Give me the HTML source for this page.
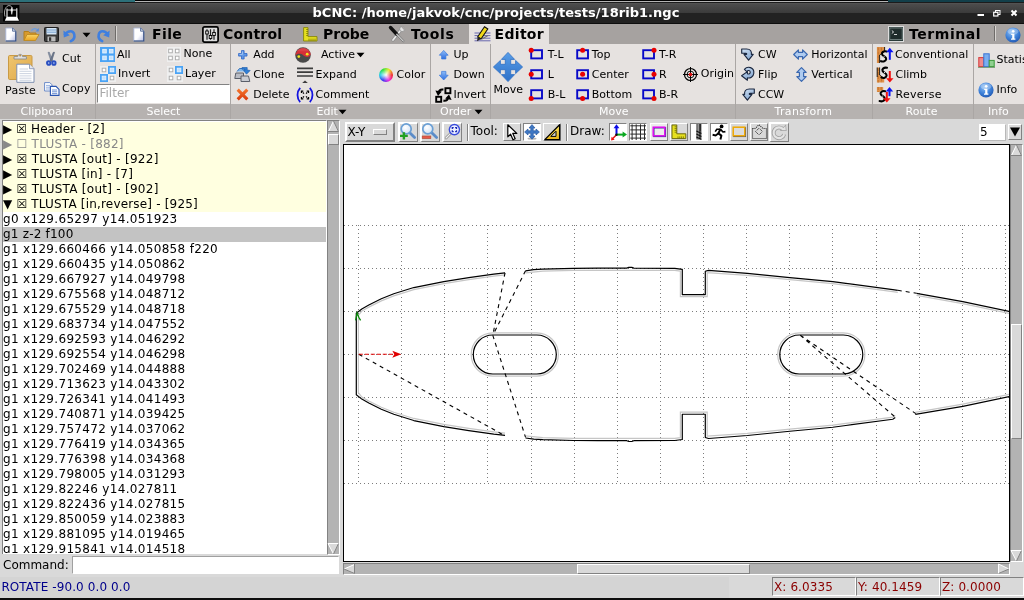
<!DOCTYPE html>
<html>
<head>
<meta charset="utf-8">
<title>bCNC</title>
<style>
html,body{margin:0;padding:0;}
body{width:1024px;height:600px;overflow:hidden;position:relative;background:#d9d9d9;font-family:"DejaVu Sans","Liberation Sans",sans-serif;font-size:12px;color:#000;}
div,span,svg{position:absolute;box-sizing:border-box;}
svg{overflow:visible;}
.t{white-space:pre;line-height:1;}
#titlebar{left:0;top:2px;width:1024px;height:22px;background:linear-gradient(#1c1c1c 0,#1c1c1c 1px,#585858 1px,#4c4c4c 2px,#3b3b3b 11px,#222 11px,#222 21px,#0e0e0e 21px);}
#tabbar{left:0;top:24px;width:1024px;height:20px;background:#a6a2a0;}
#edtab{left:469px;top:24px;width:80px;height:20px;background:#e6e2e0;}
#ribbon{left:0;top:44px;width:1024px;height:60px;background:#e6e2e0;}
#glabels{left:0;top:104px;width:1024px;height:15px;background:#b6b2b0;}
.sep{top:44px;width:1.4px;height:75px;background:#aaa6a4;}
.row{left:3px;width:323px;height:15px;font-size:12px;line-height:15px;white-space:pre;letter-spacing:0.3px;padding-left:0;}
.blk{background:#ffffe0;letter-spacing:0.1px;}
.raised{border:1px solid;border-color:#fff #828282 #828282 #fff;background:#d9d9d9;}
.sunken{border:1px solid;border-color:#828282 #fff #fff #828282;}
.tb{top:123px;width:19px;height:19px;border:1px solid;border-color:#fff #828282 #828282 #fff;background:#d9d9d9;}
.tbs{top:123px;width:19px;height:19px;border:1px solid;border-color:#828282 #fff #fff #828282;background:#fff;}
</style>
</head>
<body>
<div id="root" style="left:0;top:0;width:1024px;height:600px;will-change:transform">
<div style="left:0;top:0;width:1024px;height:3px;background:#1a1a1a"></div>
<div style="left:0;top:0;width:135px;height:2px;background:#2c7079"></div>
<div style="left:135px;top:0;width:753px;height:1px;background:#000"></div>
<div style="left:135px;top:1px;width:753px;height:1px;background:#b4b4b4"></div>
<div style="left:888px;top:0;width:136px;height:2px;background:#123f4a"></div>
<div id="titlebar"></div>
<svg style="left:2.8px;top:5px" width="17" height="17" viewBox="0 0 17 17"><rect x="0" y="0" width="16.4" height="16.4" fill="#000"/><path d="M2 11.5C0.2 5 3.5 0.5 6 0.6C8.2 0.7 9.2 2.2 9.4 3.6" stroke="#e8e8e8" stroke-width="0.7" fill="none"/><path d="M4 12V3.6M13.8 12V3.2" stroke="#fff" stroke-width="1.1"/><path d="M4 5H13.8" stroke="#c8c8c8" stroke-width="1.1"/><path d="M8.8 2.4L9.6 5L8.8 9.4L8 5Z" fill="#fff" stroke="#fff" stroke-width="0.5"/><path d="M3.6 11.7H14.2L16 15.8H1.8Z" fill="#fff"/></svg>
<span class="t" style="left:312.5px;top:6.40px;font-size:13px;color:#fff;font-weight:bold;letter-spacing:0.03px;">bCNC: /home/jakvok/cnc/projects/tests/18rib1.ngc</span>
<svg style="left:977px;top:9px" width="8" height="8" viewBox="0 0 8 8"><rect x="0.5" y="5" width="6.5" height="2" fill="#fff"/></svg>
<svg style="left:993px;top:9px" width="8" height="8" viewBox="0 0 8 8"><rect x="2.5" y="1.5" width="4.5" height="4" fill="none" stroke="#fff" stroke-width="1"/><rect x="0.7" y="3.3" width="4.2" height="3.7" fill="#2c2c2c" stroke="#fff" stroke-width="1.2"/></svg>
<svg style="left:1010px;top:9px" width="8" height="8" viewBox="0 0 8 8"><path d="M1.5 1.5L6.5 6.5M6.5 1.5L1.5 6.5" stroke="#fff" stroke-width="2"/></svg>
<div id="tabbar"></div><div id="edtab"></div>
<svg style="left:5px;top:27px" width="12" height="15" viewBox="0 0 12 15"><defs><linearGradient id="gnew" x1="0" y1="0" x2="1" y2="1"><stop offset="0" stop-color="#fff"/><stop offset="0.55" stop-color="#fdfdff"/><stop offset="1" stop-color="#b4bbe0"/></linearGradient></defs><path d="M0.8 1H7.6L10.8 4.2V14H0.8Z" fill="url(#gnew)" stroke="#a8b4d4" stroke-width="0.9"/><path d="M10.8 4.2V14H0.8" fill="none" stroke="#2f4a80" stroke-width="1.1"/><path d="M7.6 1V4.2H10.8Z" fill="#e6eaf6" stroke="#3c5688" stroke-width="0.8"/></svg>
<svg style="left:23px;top:27px" width="17" height="15" viewBox="0 0 17 15"><defs><linearGradient id="gfo" x1="0" y1="0" x2="0" y2="1"><stop offset="0" stop-color="#fad566"/><stop offset="1" stop-color="#eaa422"/></linearGradient></defs><path d="M1 13.5V4.5H5.5L7 6H13V8" fill="#d79a2e" stroke="#b37f1c" stroke-width="1"/><path d="M1 13.5L4 7.5H16L12.5 13.5Z" fill="url(#gfo)" stroke="#c08a20" stroke-width="0.9"/><path d="M8.5 3.6C10 1 13 1 14.5 3" stroke="#6a9ce0" stroke-width="1.3" fill="none"/><path d="M15.8 1V4.6H12.4Z" fill="#5a8cd8"/></svg>
<svg style="left:44px;top:27px" width="15" height="15" viewBox="0 0 15 15"><rect x="0.5" y="0.5" width="14" height="14" rx="0.8" fill="#3a3a3a" stroke="#1e1e1e"/><rect x="2.5" y="1" width="10" height="6.5" fill="#d6e6f5"/><path d="M2.5 3H12.5M2.5 5.2H12.5" stroke="#7aa3cf" stroke-width="1"/><rect x="3.5" y="9.5" width="8" height="5" fill="#bdbdbd"/><rect x="5" y="10.3" width="2.2" height="3.6" fill="#333"/></svg>
<svg style="left:63px;top:28px" width="14" height="14" viewBox="0 0 14 14"><path d="M2 6.5C5 2.2 10.2 2.2 11.2 6.2C12 9.5 10.2 12 7.8 13.2" stroke="#3f7fe0" stroke-width="2.6" fill="none" stroke-linecap="round"/><path d="M0.4 2.6L6.8 7.2L0.8 9.4Z" fill="#3f7fe0"/></svg>
<svg style="left:82px;top:32px" width="9" height="6" viewBox="0 0 9 6"><path d="M0.5 0.8H8.5L4.5 5.2Z" fill="#000"/></svg>
<svg style="left:96px;top:28px" width="14" height="14" viewBox="0 0 14 14"><g transform="translate(14 0) scale(-1 1)"><path d="M2 6.5C5 2.2 10.2 2.2 11.2 6.2C12 9.5 10.2 12 7.8 13.2" stroke="#3f7fe0" stroke-width="2.6" fill="none" stroke-linecap="round"/><path d="M0.4 2.6L6.8 7.2L0.8 9.4Z" fill="#3f7fe0"/></g></svg>
<div style="left:115px;top:26px;width:1px;height:15px;background:#6e6b69"></div><div style="left:116px;top:26px;width:1px;height:15px;background:#d8d5d2"></div>
<svg style="left:133px;top:27px" width="12" height="15" viewBox="0 0 12 15"><defs><linearGradient id="gnew" x1="0" y1="0" x2="1" y2="1"><stop offset="0" stop-color="#fff"/><stop offset="0.55" stop-color="#fdfdff"/><stop offset="1" stop-color="#b4bbe0"/></linearGradient></defs><path d="M0.8 1H7.6L10.8 4.2V14H0.8Z" fill="url(#gnew)" stroke="#a8b4d4" stroke-width="0.9"/><path d="M10.8 4.2V14H0.8" fill="none" stroke="#2f4a80" stroke-width="1.1"/><path d="M7.6 1V4.2H10.8Z" fill="#e6eaf6" stroke="#3c5688" stroke-width="0.8"/></svg>
<span class="t" style="left:152px;top:27.16px;font-size:14px;font-weight:bold;letter-spacing:0.4px;">File</span>
<svg style="left:201.6px;top:25.6px" width="17" height="17" viewBox="0 0 17 17"><rect x="0.9" y="0.9" width="15.2" height="15.2" rx="1.6" fill="#dcdcdc" stroke="#000" stroke-width="1.7"/><path d="M5 3.2V13.8M8.5 3.2V13.8M12 3.2V13.8" stroke="#222" stroke-width="1.2"/><rect x="3.7" y="5" width="2.6" height="3" fill="#e8e8e8" stroke="#000" stroke-width="0.9"/><rect x="7.2" y="9.5" width="2.6" height="3" fill="#e8e8e8" stroke="#000" stroke-width="0.9"/><rect x="10.7" y="6.5" width="2.6" height="3" fill="#e8e8e8" stroke="#000" stroke-width="0.9"/></svg>
<span class="t" style="left:223px;top:27.16px;font-size:14px;font-weight:bold;letter-spacing:0.2px;">Control</span>
<svg style="left:303px;top:27px" width="15" height="15" viewBox="0 0 15 15"><path d="M0.6 0.6H5V9.6H14V14H0.6Z" fill="#e6e01e" stroke="#8c8a10" stroke-width="1"/><path d="M3.2 2.5H5M3.2 4.5H5M3.2 6.5H5M3.2 8.5H5M6 11.6V14M8 11.6V14M10 11.6V14M12 11.6V14" stroke="#77750a" stroke-width="0.8"/></svg>
<span class="t" style="left:323px;top:27.16px;font-size:14px;font-weight:bold;">Probe</span>
<svg style="left:389px;top:26px" width="17" height="17" viewBox="0 0 17 17"><path d="M13.2 2.2L4 14" stroke="#8e8e8e" stroke-width="3.2" stroke-linecap="round"/><path d="M13.2 2.2L4 14" stroke="#e9e9e9" stroke-width="1.8" stroke-linecap="round"/><circle cx="13.2" cy="3" r="2.6" fill="#e4e4e4" stroke="#8e8e8e" stroke-width="0.8"/><path d="M13 0.5L14.8 2.8L16.6 2" stroke="#a6a2a0" stroke-width="1.6" fill="none"/><path d="M1.5 1.5L8 8.5" stroke="#111" stroke-width="3.4" stroke-linecap="round"/><path d="M8 8.5L14.5 15.2" stroke="#777" stroke-width="2.2" stroke-linecap="round"/><path d="M8 8.5L14.5 15.2" stroke="#f2f2f2" stroke-width="1" stroke-linecap="round"/></svg>
<span class="t" style="left:411px;top:27.16px;font-size:14px;font-weight:bold;letter-spacing:0.7px;">Tools</span>
<svg style="left:474px;top:26px" width="17" height="16" viewBox="0 0 17 16"><path d="M0.5 7H16.5M0.5 9.6H16.5M0.5 12.2H16.5M0.5 14.8H16.5" stroke="#5a5aa8" stroke-width="0.9"/><path d="M10.5 0.8L13.8 3L7 13L3.7 10.8Z" fill="#f0d81a" stroke="#111" stroke-width="1.1"/><path d="M3.7 10.8L7 13L3 15.2Z" fill="#222"/><path d="M8 13L14 9.5" stroke="#777" stroke-width="1.2"/></svg>
<span class="t" style="left:494.6px;top:27.16px;font-size:14px;font-weight:bold;letter-spacing:0.3px;">Editor</span>
<svg style="left:888px;top:26px" width="16" height="16" viewBox="0 0 16 16"><rect x="0.5" y="0.5" width="15" height="15" fill="#2a3a38" stroke="#ddd" stroke-width="1"/><rect x="1.8" y="2" width="12.4" height="11.5" fill="#1f2c2b" stroke="#7d8c8a" stroke-width="0.8"/><path d="M3.8 4.5L5.6 6L3.8 7.5" stroke="#e8e8e8" stroke-width="0.9" fill="none"/><path d="M6 8.5H9" stroke="#e8e8e8" stroke-width="0.9"/></svg>
<span class="t" style="left:909px;top:27.16px;font-size:14px;font-weight:bold;letter-spacing:0.55px;">Terminal</span>
<div style="left:994px;top:26px;width:1px;height:15px;background:#6e6b69"></div><div style="left:995px;top:26px;width:1px;height:15px;background:#d8d5d2"></div>
<svg style="left:1005px;top:27px" width="16" height="16" viewBox="0 0 16 16"><defs><radialGradient id="ginf" cx="0.4" cy="0.3" r="0.8"><stop offset="0" stop-color="#8fc0f5"/><stop offset="0.55" stop-color="#3d80d8"/><stop offset="1" stop-color="#1c4fa8"/></radialGradient></defs><circle cx="8" cy="8" r="7.6" fill="url(#ginf)"/><ellipse cx="8" cy="4.6" rx="5.4" ry="3.2" fill="#fff" opacity="0.28"/><circle cx="8.2" cy="4.3" r="1.35" fill="#fff"/><path d="M6.2 6.8H9.4V11.6H10.4V12.8H6V11.6H7.2V8H6.2Z" fill="#fff"/></svg>
<div id="ribbon"></div><div id="glabels"></div>
<div class="sep" style="left:95px"></div>
<div class="sep" style="left:230px"></div>
<div class="sep" style="left:430px"></div>
<div class="sep" style="left:489.5px"></div>
<div class="sep" style="left:734.5px"></div>
<div class="sep" style="left:872px"></div>
<div class="sep" style="left:973px"></div>
<span class="t" style="left:20.5px;top:106.19px;font-size:11px;color:#fff;">Clipboard</span>
<span class="t" style="left:146.5px;top:106.19px;font-size:11px;color:#fff;">Select</span>
<span class="t" style="left:316.5px;top:106.19px;font-size:11px;color:#fff;">Edit</span>
<span class="t" style="left:440px;top:106.19px;font-size:11px;color:#fff;">Order</span>
<span class="t" style="left:599px;top:106.19px;font-size:11px;color:#fff;">Move</span>
<span class="t" style="left:774.5px;top:106.19px;font-size:11px;color:#fff;letter-spacing:0.35px;">Transform</span>
<span class="t" style="left:905.5px;top:106.19px;font-size:11px;color:#fff;">Route</span>
<span class="t" style="left:988px;top:106.19px;font-size:11px;color:#fff;">Info</span>
<svg style="left:338px;top:109px" width="9" height="6" viewBox="0 0 9 6"><path d="M0.5 0.8H8.5L4.5 5.2Z" fill="#000"/></svg>
<svg style="left:474px;top:109px" width="9" height="6" viewBox="0 0 9 6"><path d="M0.5 0.8H8.5L4.5 5.2Z" fill="#000"/></svg>
<svg style="left:8px;top:52px" width="27" height="31" viewBox="0 0 27 31"><defs><linearGradient id="gpst" x1="0" y1="0" x2="1" y2="1"><stop offset="0" stop-color="#f0c670"/><stop offset="1" stop-color="#dda84a"/></linearGradient></defs><rect x="0.5" y="3.5" width="23.5" height="24" rx="1.2" fill="url(#gpst)" stroke="#c99a45" stroke-width="1"/><path d="M6 7V4.6H9.6C9.8 1.6 14.4 1.6 14.6 4.6H18.4V7Z" fill="#e2e2e2" stroke="#8a8a8a" stroke-width="0.9"/><circle cx="12.1" cy="3.6" r="0.9" fill="#b9873a"/><path d="M8.8 12.2H21.5L26 16.7V30.3H8.8Z" fill="#fff" stroke="#7f8fb0" stroke-width="1"/><path d="M21.5 12.2V16.7H26" fill="#e4e8f2" stroke="#7f8fb0" stroke-width="0.8"/><path d="M11.5 17H20M11.5 19.3H23.5M11.5 21.6H23.5M11.5 23.9H23.5M11.5 26.2H23.5M11.5 28.3H23.5" stroke="#c6cedc" stroke-width="0.9"/></svg>
<span class="t" style="left:5px;top:85.49px;font-size:11px;letter-spacing:0.25px;">Paste</span>
<svg style="left:46px;top:52px" width="11" height="14" viewBox="0 0 11 14"><path d="M2 0.3L3.4 0.3L6.6 8.6L5 9.4Z" fill="#8e98aa" stroke="#5f6a80" stroke-width="0.5"/><path d="M8.6 0.3L7.2 0.3L4 8.6L5.6 9.4Z" fill="#6f7a90" stroke="#4a5468" stroke-width="0.5"/><ellipse cx="2.7" cy="11" rx="1.7" ry="1.9" fill="#9ab0ea" stroke="#2a4fc0" stroke-width="1.9"/><ellipse cx="7.9" cy="11" rx="1.7" ry="1.9" fill="#9ab0ea" stroke="#2a4fc0" stroke-width="1.9"/></svg>
<span class="t" style="left:62px;top:53.29px;font-size:11px;">Cut</span>
<svg style="left:44px;top:82px" width="16" height="14" viewBox="0 0 16 14"><path d="M0.6 0.6H5.8L8 2.8V9H0.6Z" fill="#fff" stroke="#6a8ac8" stroke-width="1"/><path d="M2 3.4H6M2 5.2H6.5M2 7H6.5" stroke="#8aa6da" stroke-width="0.9"/><path d="M6.4 4.4H12L15 7.4V13.4H6.4Z" fill="#fff" stroke="#2a55b0" stroke-width="1.1"/><path d="M8 8H13.2M8 9.8H13.2M8 11.6H13.2" stroke="#5f86d0" stroke-width="0.9"/></svg>
<span class="t" style="left:62px;top:83.49px;font-size:11px;letter-spacing:0.2px;">Copy</span>
<svg style="left:100px;top:47px" width="15" height="15" viewBox="0 0 15 15"><rect width="15" height="15" fill="#4aa3f5"/><rect x="2.7" y="2.4" width="3.6" height="3.6" fill="#c4e1fb" stroke="#e4f1fd" stroke-width="0.9"/><rect x="9.4" y="2.4" width="3.6" height="3.6" fill="#c4e1fb" stroke="#e4f1fd" stroke-width="0.9"/><rect x="2.7" y="9.1" width="3.6" height="3.6" fill="#c4e1fb" stroke="#e4f1fd" stroke-width="0.9"/><rect x="9.4" y="9.1" width="3.6" height="3.6" fill="#c4e1fb" stroke="#e4f1fd" stroke-width="0.9"/></svg>
<span class="t" style="left:117px;top:48.69px;font-size:11px;">All</span>
<svg style="left:167px;top:47px" width="14" height="15" viewBox="0 0 14 15"><rect width="14" height="15" fill="#efefef"/><rect x="1.7" y="2.2" width="3.6" height="3.6" fill="#fff" stroke="#a8a8a8" stroke-width="0.9"/><rect x="8.4" y="2.2" width="3.6" height="3.6" fill="#fff" stroke="#a8a8a8" stroke-width="0.9"/><rect x="1.7" y="9.2" width="3.6" height="3.6" fill="#fff" stroke="#a8a8a8" stroke-width="0.9"/><rect x="8.4" y="9.2" width="3.6" height="3.6" fill="#fff" stroke="#a8a8a8" stroke-width="0.9"/></svg>
<span class="t" style="left:183.5px;top:47.69px;font-size:11px;">None</span>
<svg style="left:100px;top:66px" width="16" height="16" viewBox="0 0 16 16"><rect x="0" y="0" width="8" height="8" fill="#efefef"/><rect x="2.2" y="2.2" width="3.6" height="3.6" fill="#fff" stroke="#a8a8a8" stroke-width="0.9"/><rect x="8" y="0" width="8" height="8" fill="#4aa3f5"/><rect x="10.2" y="2.2" width="3.6" height="3.6" fill="#c4e1fb" stroke="#e4f1fd" stroke-width="0.9"/><rect x="0" y="8" width="8" height="8" fill="#4aa3f5"/><rect x="2.2" y="10.2" width="3.6" height="3.6" fill="#c4e1fb" stroke="#e4f1fd" stroke-width="0.9"/><rect x="8" y="8" width="8" height="8" fill="#efefef"/><rect x="10.2" y="10.2" width="3.6" height="3.6" fill="#fff" stroke="#a8a8a8" stroke-width="0.9"/></svg>
<span class="t" style="left:118px;top:67.69px;font-size:11px;">Invert</span>
<svg style="left:167px;top:66px" width="16" height="16" viewBox="0 0 16 16"><rect x="0" y="0" width="8" height="8" fill="#efefef"/><rect x="2.2" y="2.2" width="3.6" height="3.6" fill="#fff" stroke="#a8a8a8" stroke-width="0.9"/><rect x="8" y="0" width="8" height="8" fill="#4aa3f5"/><rect x="10.2" y="2.2" width="3.6" height="3.6" fill="#c4e1fb" stroke="#e4f1fd" stroke-width="0.9"/><rect x="0" y="8" width="8" height="8" fill="#efefef"/><rect x="2.2" y="10.2" width="3.6" height="3.6" fill="#fff" stroke="#a8a8a8" stroke-width="0.9"/><rect x="8" y="8" width="8" height="8" fill="#efefef"/><rect x="10.2" y="10.2" width="3.6" height="3.6" fill="#fff" stroke="#a8a8a8" stroke-width="0.9"/></svg>
<span class="t" style="left:185px;top:67.69px;font-size:11px;">Layer</span>
<div class="sunken" style="left:97px;top:84px;width:133px;height:19px;background:#fff;border-width:1px"></div>
<span class="t" style="left:99.5px;top:86.85px;font-size:12px;color:#a9a9a9;">Filter</span>
<svg style="left:238px;top:49.6px" width="10" height="10" viewBox="0 0 10 10"><path d="M3.5 0.6H6.1V3.5H9V6.1H6.1V9H3.5V6.1H0.6V3.5H3.5Z" fill="#5f98e8" stroke="#2f66c4" stroke-width="0.8"/><path d="M4.4 1.5V4.4H1.5" stroke="#b4d0f6" stroke-width="0.8" fill="none"/></svg>
<span class="t" style="left:253.3px;top:48.69px;font-size:11px;">Add</span>
<svg style="left:234px;top:66px" width="17" height="17" viewBox="0 0 17 17"><path d="M3 5.5L5.5 2.5H10L12 5.5" fill="#7db5ea" stroke="#2a6ab8" stroke-width="0.9"/><path d="M8 1.5H13.2V4L16.2 4.5L12.5 8.2L9.5 4.5H11V3.2H8Z" fill="#2f7fd6" stroke="#1c5aa8" stroke-width="0.6"/><path d="M1.8 7H9.5V12.5H0.8Z" fill="#b9bcc4" stroke="#5a5f6a" stroke-width="1"/><path d="M7 10H14.5L15.8 15.5H7Z" fill="#c9ccd2" stroke="#5a5f6a" stroke-width="1"/></svg>
<span class="t" style="left:253.3px;top:68.69px;font-size:11px;">Clone</span>
<svg style="left:236px;top:88px" width="13" height="13" viewBox="0 0 13 13"><defs><linearGradient id="gdel" x1="0" y1="0" x2="0" y2="1"><stop offset="0" stop-color="#f67a30"/><stop offset="1" stop-color="#d6360a"/></linearGradient></defs><path d="M0.6 2.8L2.8 0.6L6.5 4.3L10.2 0.6L12.4 2.8L8.7 6.5L12.4 10.2L10.2 12.4L6.5 8.7L2.8 12.4L0.6 10.2L4.3 6.5Z" fill="url(#gdel)"/></svg>
<span class="t" style="left:253.3px;top:88.69px;font-size:11px;">Delete</span>
<svg style="left:295px;top:46.8px" width="16" height="16" viewBox="0 0 16 16"><circle cx="8" cy="8" r="7.8" fill="#4a4a4a"/><path d="M0.3 8.8A7.8 7.8 0 0 1 15.7 7.2C14.5 11 10.5 10.2 8.2 8.2C5.8 6.2 2 6.4 0.3 8.8Z" fill="#d63038"/><path d="M1.5 4.2A7.8 7.8 0 0 1 14.5 4.2" fill="#e05058" opacity="0.5"/><circle cx="12.2" cy="7.2" r="1.4" fill="#f2e81e"/><circle cx="3.8" cy="9.6" r="1.4" fill="#f2e81e"/></svg>
<span class="t" style="left:321px;top:48.69px;font-size:11px;">Active</span>
<svg style="left:356px;top:52px" width="9" height="6" viewBox="0 0 9 6"><path d="M0.5 0.8H8.5L4.5 5.2Z" fill="#000"/></svg>
<svg style="left:297px;top:66.8px" width="16" height="17" viewBox="0 0 16 17"><path d="M0 1.3H16M0 5.1H16M0 9H16" stroke="#3c3c3c" stroke-width="1.7"/><path d="M5.2 16L8 13.4L10.8 16Z" fill="#3c3c3c"/></svg>
<span class="t" style="left:315.5px;top:68.69px;font-size:11px;">Expand</span>
<svg style="left:296px;top:87px" width="18" height="16" viewBox="0 0 18 16"><path d="M4.2 0.8C0.6 4.8 0.6 11.2 4.2 15.2" stroke="#1414e0" stroke-width="1.8" fill="none"/><path d="M13.8 0.8C17.4 4.8 17.4 11.2 13.8 15.2" stroke="#1414e0" stroke-width="1.8" fill="none"/><path d="M5.5 6V4.2H7.3M10.7 4.2H12.5V6M12.5 10V11.8H10.7M7.3 11.8H5.5V10" stroke="#000" stroke-width="1.3" fill="none"/><path d="M6.8 5.5L8 6.7M11.2 5.5L10 6.7M11.2 10.5L10 9.3M6.8 10.5L8 9.3" stroke="#000" stroke-width="1.1"/></svg>
<span class="t" style="left:315.5px;top:88.69px;font-size:11px;">Comment</span>
<div style="left:379px;top:67.6px;width:14.2px;height:14.2px;border-radius:50%;background:radial-gradient(circle,#fff 0,rgba(255,255,255,0.6) 25%,rgba(255,255,255,0) 62%),conic-gradient(from 90deg,#f02828,#f028e0,#3838f0,#28d0e8,#28e038,#e8e828,#f02828)"></div>
<span class="t" style="left:396.5px;top:68.69px;font-size:11px;">Color</span>
<svg style="left:438.8px;top:49.8px" width="10" height="10" viewBox="0 0 10 10"><defs><linearGradient id="gup" x1="0" y1="0" x2="0" y2="1"><stop offset="0" stop-color="#8dbcf8"/><stop offset="1" stop-color="#2f6fe0"/></linearGradient></defs><path d="M4.7 0.4L9.2 5.2H6.9V9H2.6V5.2H0.3Z" fill="url(#gup)" stroke="#3a78dc" stroke-width="0.7"/></svg>
<span class="t" style="left:453.5px;top:48.69px;font-size:11px;">Up</span>
<svg style="left:438.8px;top:71px" width="10" height="10" viewBox="0 0 10 10"><path d="M4.7 9L9.2 4.2H6.9V0.4H2.6V4.2H0.3Z" fill="url(#gup)" stroke="#3a78dc" stroke-width="0.7"/></svg>
<span class="t" style="left:453.5px;top:68.69px;font-size:11px;">Down</span>
<svg style="left:434.8px;top:86.8px" width="17" height="16" viewBox="0 0 17 16"><rect x="10.4" y="1.2" width="5" height="5" fill="none" stroke="#000" stroke-width="1.9"/><rect x="1.2" y="9.8" width="5" height="5" fill="none" stroke="#000" stroke-width="1.9"/><path d="M8.4 2.6C5.8 2.2 4 3.6 3.6 5.8" stroke="#000" stroke-width="2.1" fill="none"/><path d="M0.4 3.4L6.8 4.6L3 9Z" fill="#000"/><path d="M8.4 13.6C11 14 12.8 12.6 13.2 10.6" stroke="#000" stroke-width="2.1" fill="none"/><path d="M16.6 13L10.2 11.6L14 7.4Z" fill="#000"/></svg>
<span class="t" style="left:453.5px;top:88.69px;font-size:11px;">Invert</span>
<svg style="left:493px;top:52px" width="30" height="30" viewBox="0 0 30 30"><defs><linearGradient id="gmv" x1="0" y1="0" x2="0" y2="1"><stop offset="0" stop-color="#5a9ee8"/><stop offset="1" stop-color="#2c70c8"/></linearGradient></defs><path d="M15 0.4L21.6 7.4H17.7V12.3H22.6V8.4L29.6 15L22.6 21.6V17.7H17.7V22.6H21.6L15 29.6L8.4 22.6H12.3V17.7H7.4V21.6L0.4 15L7.4 8.4V12.3H12.3V7.4H8.4Z" fill="url(#gmv)" stroke="#2d6fc4" stroke-width="0.8"/></svg>
<span class="t" style="left:493.5px;top:84.19px;font-size:11px;">Move</span>
<svg style="left:528px;top:46px" width="18" height="16" viewBox="0 0 18 16"><rect x="3.2" y="4.2" width="10.8" height="8.2" fill="none" stroke="#0808c8" stroke-width="1.9"/><circle cx="3.2" cy="4.2" r="2.5" fill="#e80000"/></svg>
<span class="t" style="left:547.8px;top:48.69px;font-size:11px;">T-L</span>
<svg style="left:528px;top:66px" width="18" height="16" viewBox="0 0 18 16"><rect x="3.2" y="4.2" width="10.8" height="8.2" fill="none" stroke="#0808c8" stroke-width="1.9"/><circle cx="3.2" cy="8.3" r="2.5" fill="#e80000"/></svg>
<span class="t" style="left:547.8px;top:68.69px;font-size:11px;">L</span>
<svg style="left:528px;top:86px" width="18" height="16" viewBox="0 0 18 16"><rect x="3.2" y="4.2" width="10.8" height="8.2" fill="none" stroke="#0808c8" stroke-width="1.9"/><circle cx="3.2" cy="12.399999999999999" r="2.5" fill="#e80000"/></svg>
<span class="t" style="left:547.8px;top:88.69px;font-size:11px;">B-L</span>
<svg style="left:573.5px;top:46px" width="18" height="16" viewBox="0 0 18 16"><rect x="3.2" y="4.2" width="10.8" height="8.2" fill="none" stroke="#0808c8" stroke-width="1.9"/><circle cx="8.600000000000001" cy="4.2" r="2.5" fill="#e80000"/></svg>
<span class="t" style="left:591.8px;top:48.69px;font-size:11px;">Top</span>
<svg style="left:573.5px;top:66px" width="18" height="16" viewBox="0 0 18 16"><rect x="3.2" y="4.2" width="10.8" height="8.2" fill="none" stroke="#0808c8" stroke-width="1.9"/><circle cx="8.600000000000001" cy="8.3" r="2.5" fill="#e80000"/></svg>
<span class="t" style="left:591.8px;top:68.69px;font-size:11px;">Center</span>
<svg style="left:573.5px;top:86px" width="18" height="16" viewBox="0 0 18 16"><rect x="3.2" y="4.2" width="10.8" height="8.2" fill="none" stroke="#0808c8" stroke-width="1.9"/><circle cx="8.600000000000001" cy="12.399999999999999" r="2.5" fill="#e80000"/></svg>
<span class="t" style="left:591.8px;top:88.69px;font-size:11px;">Bottom</span>
<svg style="left:639.5px;top:46px" width="18" height="16" viewBox="0 0 18 16"><rect x="3.2" y="4.2" width="10.8" height="8.2" fill="none" stroke="#0808c8" stroke-width="1.9"/><circle cx="14.0" cy="4.2" r="2.5" fill="#e80000"/></svg>
<span class="t" style="left:659px;top:48.69px;font-size:11px;">T-R</span>
<svg style="left:639.5px;top:66px" width="18" height="16" viewBox="0 0 18 16"><rect x="3.2" y="4.2" width="10.8" height="8.2" fill="none" stroke="#0808c8" stroke-width="1.9"/><circle cx="14.0" cy="8.3" r="2.5" fill="#e80000"/></svg>
<span class="t" style="left:659px;top:68.69px;font-size:11px;">R</span>
<svg style="left:639.5px;top:86px" width="18" height="16" viewBox="0 0 18 16"><rect x="3.2" y="4.2" width="10.8" height="8.2" fill="none" stroke="#0808c8" stroke-width="1.9"/><circle cx="14.0" cy="12.399999999999999" r="2.5" fill="#e80000"/></svg>
<span class="t" style="left:659px;top:88.69px;font-size:11px;">B-R</span>
<svg style="left:683px;top:67px" width="15" height="15" viewBox="0 0 15 15"><circle cx="7.5" cy="7.5" r="6" fill="none" stroke="#000" stroke-width="1.2"/><circle cx="7.5" cy="7.5" r="3.4" fill="none" stroke="#000" stroke-width="0.9"/><path d="M7.5 0V15M0 7.5H15" stroke="#000" stroke-width="1"/><circle cx="7.5" cy="7.5" r="1.8" fill="#e01010"/></svg>
<span class="t" style="left:700.8px;top:67.69px;font-size:11px;">Origin</span>
<svg style="left:741.3px;top:48.4px" width="13" height="13" viewBox="0 0 13 13"><defs><linearGradient id="gtr" x1="0" y1="0" x2="0.6" y2="1"><stop offset="0" stop-color="#d2e2f4"/><stop offset="1" stop-color="#86a8d2"/></linearGradient></defs><path d="M0.7 1H5.6C9.4 1 10.8 3.2 10.4 6.4H12.2L7.6 12.2L3 6.4H5.6C5.8 5.6 5.4 5.2 4.6 5.2H0.7Z" fill="url(#gtr)" stroke="#1c2840" stroke-width="1.15" stroke-linejoin="round"/></svg>
<span class="t" style="left:758px;top:48.69px;font-size:11px;">CW</span>
<svg style="left:740.6px;top:66.4px" width="14" height="15" viewBox="0 0 14 15"><path d="M3.4 3.4C6.6 -0.6 13.4 1.4 12.8 7.2C12.4 11 9 12.6 6.4 11.8V14.2L0.6 9.8L6.4 5.6V7.8C8 8.4 9.2 7.6 9.2 6.2C9.2 4.4 7 3.8 5.8 5.6Z" fill="url(#gtr)" stroke="#1c2840" stroke-width="1.15" stroke-linejoin="round"/></svg>
<span class="t" style="left:758px;top:68.69px;font-size:11px;">Flip</span>
<svg style="left:742px;top:88.4px" width="13" height="13" viewBox="0 0 13 13"><path d="M12.3 1H7.4C3.6 1 2.2 3.2 2.6 6.4H0.8L5.4 12.2L10 6.4H7.4C7.2 5.6 7.6 5.2 8.4 5.2H12.3Z" fill="url(#gtr)" stroke="#1c2840" stroke-width="1.15" stroke-linejoin="round"/></svg>
<span class="t" style="left:758px;top:88.69px;font-size:11px;">CCW</span>
<svg style="left:793.4px;top:48.8px" width="15" height="11" viewBox="0 0 15 11"><path d="M0.7 5.5L5.4 0.8V3.4H9.6V0.8L14.3 5.5L9.6 10.2V7.6H5.4V10.2Z" fill="#aecbf0" stroke="#3a68b0" stroke-width="1.2" stroke-linejoin="round"/></svg>
<span class="t" style="left:811.3px;top:48.69px;font-size:11px;">Horizontal</span>
<svg style="left:796.2px;top:67.4px" width="11" height="15" viewBox="0 0 11 15"><path d="M5.5 0.7L10.2 5.4H7.6V9.6H10.2L5.5 14.3L0.8 9.6H3.4V5.4H0.8Z" fill="#aecbf0" stroke="#3a68b0" stroke-width="1.2" stroke-linejoin="round"/></svg>
<span class="t" style="left:811.3px;top:68.69px;font-size:11px;">Vertical</span>
<svg style="left:876px;top:46px" width="18" height="18" viewBox="0 0 18 18"><path d="M0.9 1.1H8.6V5.4L3.6 9V17H0.9Z" fill="#e0914a"/><path d="M2.2 1.5V17" stroke="#b5651e" stroke-width="0.7" stroke-dasharray="3 1"/><path d="M5.4 1.5V6" stroke="#b5651e" stroke-width="0.7" stroke-dasharray="3 1"/><path d="M8.6 1V5.4L3.6 9V17" stroke="#111" stroke-width="0.9" fill="none"/><path d="M10.6 5.3999999999999995C7.6 4.6 5.199999999999999 6.6 6.199999999999999 8.6C6.999999999999999 10.2 10.6 10.799999999999999 10.2 13.2C9.799999999999999 15.399999999999999 7.199999999999999 16.0 4.999999999999999 15.2" stroke="#000" stroke-width="2.1" fill="none" stroke-linecap="round"/><circle cx="8.1" cy="10.2" r="0.55" fill="#fff"/><circle cx="6.6" cy="13.0" r="0.5" fill="#fff"/><path d="M13.8 13.8V4.3" stroke="#0a14f0" stroke-width="2"/><path d="M10.100000000000001 6.2L13.8 1.8L17.5 6.2Z" fill="#0a14f0"/></svg>
<span class="t" style="left:895px;top:48.69px;font-size:11px;letter-spacing:0.08px;">Conventional</span>
<svg style="left:876px;top:66px" width="18" height="18" viewBox="0 0 18 18"><path d="M0.9 1.5H3.6V9L8.2 12.4V16.6H0.9Z" fill="#e0914a"/><path d="M2.2 2V16.6" stroke="#b5651e" stroke-width="0.7" stroke-dasharray="3 1"/><path d="M5.6 12.4V16.6" stroke="#b5651e" stroke-width="0.7" stroke-dasharray="3 1"/><path d="M1.2 1.5V11M3.6 1.5V9L8.2 12.4" stroke="#111" stroke-width="0.9" fill="none"/><path d="M11.0 1.7999999999999998C8.0 1 5.6 3 6.6 5C7.3999999999999995 6.6 11.0 7.2 10.6 9.6C10.2 11.8 7.6 12.4 5.3999999999999995 11.6" stroke="#000" stroke-width="2.1" fill="none" stroke-linecap="round"/><circle cx="8.5" cy="6.6" r="0.55" fill="#fff"/><circle cx="7.0" cy="9.4" r="0.5" fill="#fff"/><path d="M13.8 5V14.100000000000001" stroke="#f01010" stroke-width="2"/><path d="M10.100000000000001 12.200000000000001L13.8 16.6L17.5 12.200000000000001Z" fill="#f01010"/></svg>
<span class="t" style="left:895.5px;top:68.69px;font-size:11px;">Climb</span>
<svg style="left:876px;top:86px" width="18" height="18" viewBox="0 0 18 18"><path d="M0.9 1H7.2V4.8H4.2V6H0.9Z" fill="#e0914a"/><path d="M2.2 1V6" stroke="#b5651e" stroke-width="0.7" stroke-dasharray="3 1"/><path d="M5.2 1V4.8" stroke="#b5651e" stroke-width="0.7" stroke-dasharray="3 1"/><path d="M9.2 5.2C6.2 4.4 3.8 6.4 4.8 8.4C5.6 10.0 9.2 10.6 8.8 13.0C8.4 15.2 5.8 15.8 3.5999999999999996 15.0" stroke="#000" stroke-width="2.1" fill="none" stroke-linecap="round"/><circle cx="6.7" cy="10.0" r="0.55" fill="#fff"/><circle cx="5.199999999999999" cy="12.8" r="0.5" fill="#fff"/><path d="M13.5 10.2V3.5" stroke="#0a14f0" stroke-width="2"/><path d="M9.8 5.4L13.5 1L17.2 5.4Z" fill="#0a14f0"/><path d="M10.8 6V14.100000000000001" stroke="#f01010" stroke-width="2"/><path d="M7.1000000000000005 12.200000000000001L10.8 16.6L14.5 12.200000000000001Z" fill="#f01010"/></svg>
<span class="t" style="left:895.5px;top:88.69px;font-size:11px;letter-spacing:0.3px;">Reverse</span>
<svg style="left:977.6px;top:52.8px" width="17" height="15" viewBox="0 0 17 15"><rect x="0.8" y="4.6" width="5" height="9" fill="#f08a8a" stroke="#d83a3a" stroke-width="1"/><rect x="5.8" y="0.8" width="5.4" height="12.8" fill="#7aaef0" stroke="#3a74d4" stroke-width="1"/><rect x="11.2" y="7.4" width="5" height="6.2" fill="#8fd08f" stroke="#3a9a3a" stroke-width="1"/><path d="M0 14.4H17" stroke="#5a8a5a" stroke-width="0.8"/></svg>
<span class="t" style="left:996.5px;top:53.69px;font-size:11px;">Statistics</span>
<svg style="left:978px;top:81.5px" width="16" height="16" viewBox="0 0 16 16"><defs><radialGradient id="ginf" cx="0.4" cy="0.3" r="0.8"><stop offset="0" stop-color="#8fc0f5"/><stop offset="0.55" stop-color="#3d80d8"/><stop offset="1" stop-color="#1c4fa8"/></radialGradient></defs><circle cx="8" cy="8" r="7.6" fill="url(#ginf)"/><ellipse cx="8" cy="4.6" rx="5.4" ry="3.2" fill="#fff" opacity="0.28"/><circle cx="8.2" cy="4.3" r="1.35" fill="#fff"/><path d="M6.2 6.8H9.4V11.6H10.4V12.8H6V11.6H7.2V8H6.2Z" fill="#fff"/></svg>
<span class="t" style="left:996.5px;top:83.99px;font-size:11px;">Info</span>
<div style="left:0;top:120px;width:327px;height:434px;background:#fff;border:1px solid;border-color:#828282 #fff #fff #828282;border-left-width:1px"></div>
<div style="left:0;top:120px;width:2px;height:434px;background:#d9d9d9"></div><div style="left:2px;top:120px;width:1px;height:434px;background:#828282"></div>
<div style="left:3px;top:122px;width:323px;height:431px;overflow:hidden">
<div class="row blk" style="left:0;top:0px;">▶ ☒ Header - [2]</div>
<div class="row blk" style="left:0;top:15px;color:#888;letter-spacing:0.25px;">▶ ☐ TLUSTA - [882]</div>
<div class="row blk" style="left:0;top:30px;letter-spacing:0.27px;">▶ ☒ TLUSTA [out] - [922]</div>
<div class="row blk" style="left:0;top:45px;letter-spacing:0.24px;">▶ ☒ TLUSTA [in] - [7]</div>
<div class="row blk" style="left:0;top:60px;letter-spacing:0.27px;">▶ ☒ TLUSTA [out] - [902]</div>
<div class="row blk" style="left:0;top:75px;letter-spacing:0.18px;">▼ ☒ TLUSTA [in,reverse] - [925]</div>
<div class="row" style="left:0;top:90px;letter-spacing:0.32px;">g0 x129.65297 y14.051923</div>
<div class="row" style="left:0;top:105px;background:#c3c3c3;letter-spacing:0.2px;">g1 z-2 f100</div>
<div class="row" style="left:0;top:120px;letter-spacing:0.32px;">g1 x129.660466 y14.050858 f220</div>
<div class="row" style="left:0;top:135px;letter-spacing:0.32px;">g1 x129.660435 y14.050862</div>
<div class="row" style="left:0;top:150px;letter-spacing:0.32px;">g1 x129.667927 y14.049798</div>
<div class="row" style="left:0;top:165px;letter-spacing:0.32px;">g1 x129.675568 y14.048712</div>
<div class="row" style="left:0;top:180px;letter-spacing:0.32px;">g1 x129.675529 y14.048718</div>
<div class="row" style="left:0;top:195px;letter-spacing:0.32px;">g1 x129.683734 y14.047552</div>
<div class="row" style="left:0;top:210px;letter-spacing:0.32px;">g1 x129.692593 y14.046292</div>
<div class="row" style="left:0;top:225px;letter-spacing:0.32px;">g1 x129.692554 y14.046298</div>
<div class="row" style="left:0;top:240px;letter-spacing:0.32px;">g1 x129.702469 y14.044888</div>
<div class="row" style="left:0;top:255px;letter-spacing:0.32px;">g1 x129.713623 y14.043302</div>
<div class="row" style="left:0;top:270px;letter-spacing:0.32px;">g1 x129.726341 y14.041493</div>
<div class="row" style="left:0;top:285px;letter-spacing:0.32px;">g1 x129.740871 y14.039425</div>
<div class="row" style="left:0;top:300px;letter-spacing:0.32px;">g1 x129.757472 y14.037062</div>
<div class="row" style="left:0;top:315px;letter-spacing:0.32px;">g1 x129.776419 y14.034365</div>
<div class="row" style="left:0;top:330px;letter-spacing:0.32px;">g1 x129.776398 y14.034368</div>
<div class="row" style="left:0;top:345px;letter-spacing:0.32px;">g1 x129.798005 y14.031293</div>
<div class="row" style="left:0;top:360px;letter-spacing:0.32px;">g1 x129.82246 y14.027811</div>
<div class="row" style="left:0;top:375px;letter-spacing:0.32px;">g1 x129.822436 y14.027815</div>
<div class="row" style="left:0;top:390px;letter-spacing:0.32px;">g1 x129.850059 y14.023883</div>
<div class="row" style="left:0;top:405px;letter-spacing:0.32px;">g1 x129.881095 y14.019465</div>
<div class="row" style="left:0;top:420px;letter-spacing:0.32px;">g1 x129.915841 y14.014518</div>
</div>
<div style="left:327px;top:120px;width:13px;height:434.5px;background:#b3b3b3;border:1px solid;border-color:#828282 #fff #fff #828282"></div>
<svg style="left:328px;top:121px" width="11" height="11" viewBox="0 0 11 11"><path d="M5.5 0 L11 10.5 L0 10.5Z" fill="#d9d9d9"/><path d="M5.5 0 L0.5 10.5" stroke="#fff" stroke-width="1" fill="none"/><path d="M5.5 0 L10.5 10.5 L0 10.5" stroke="#828282" stroke-width="1" fill="none"/></svg>
<svg style="left:328px;top:542.5px" width="11" height="11" viewBox="0 0 11 11"><path d="M0 0.5 L11 0.5 L5.5 11Z" fill="#d9d9d9"/><path d="M11 0.5 L0 0.5 L5.5 11" stroke="#fff" stroke-width="1" fill="none"/><path d="M5.5 11 L10.5 0.5" stroke="#828282" stroke-width="1" fill="none"/></svg>
<div class="raised" style="left:328px;top:134px;width:11px;height:11px"></div>
<span class="t" style="left:3px;top:558.65px;font-size:12px;">Command:</span>
<div style="left:72px;top:556px;width:267px;height:18px;background:#fff;border:1px solid;border-color:#a0a0a0 #fff #fff #a0a0a0"></div>
<div style="left:0;top:576px;width:1024px;height:22px;background:#d9d9d9"></div>
<div style="left:0;top:577px;width:729px;height:20.6px;background:#d4d4d4"></div>
<div style="left:0;top:597.6px;width:1024px;height:3px;background:#0c0c0c"></div>
<span class="t" style="left:1.4px;top:580.85px;font-size:12px;color:#00008b;letter-spacing:0.1px;">ROTATE -90.0 0.0 0.0</span>
<div style="left:772px;top:577px;width:84px;height:19px;border:1px solid;border-color:#828282 #fff #fff #828282"></div>
<span class="t" style="left:774px;top:580.85px;font-size:12px;color:#8b0000;letter-spacing:0.1px;">X: 6.0335</span>
<div style="left:856px;top:577px;width:84px;height:19px;border:1px solid;border-color:#828282 #fff #fff #828282"></div>
<span class="t" style="left:858px;top:580.85px;font-size:12px;color:#8b0000;letter-spacing:0.1px;">Y: 40.1459</span>
<div style="left:940px;top:577px;width:84px;height:19px;border:1px solid;border-color:#828282 #fff #fff #828282"></div>
<span class="t" style="left:942px;top:580.85px;font-size:12px;color:#8b0000;letter-spacing:0.1px;">Z: 0.0000</span>
<div class="raised" style="left:345px;top:122px;width:50px;height:20px;border-width:2px 2px 2px 2px;border-color:#fff #828282 #828282 #fff"></div>
<span class="t" style="left:347.5px;top:126.15px;font-size:12px;">X-Y</span>
<div class="raised" style="left:373px;top:129px;width:14px;height:6px;"></div>
<div class="tb" style="left:398px;top:122px;width:20px;height:20px;border-width:2px 1px 1px 2px"></div>
<svg style="left:398.3px;top:122px" width="18" height="18" viewBox="0 0 18 18"><defs><radialGradient id="ggl" cx="0.4" cy="0.35" r="0.7"><stop offset="0" stop-color="#ffffff"/><stop offset="1" stop-color="#cfe0f5"/></radialGradient></defs><path d="M11.5 10.5L16.6 15.6" stroke="#5b8cc8" stroke-width="2.8" stroke-linecap="round"/><circle cx="8.2" cy="6.9" r="5" fill="url(#ggl)" stroke="#6a9fd4" stroke-width="1.7"/><path d="M5.9 10.3V17.5M2 13.9H9.8" stroke="#22a022" stroke-width="2.4"/></svg>
<div class="tb" style="left:420px;top:122px;width:20px;height:20px;border-width:2px 1px 1px 2px"></div>
<svg style="left:420.3px;top:122px" width="18" height="18" viewBox="0 0 18 18"><path d="M11.5 10.5L16.6 15.6" stroke="#5b8cc8" stroke-width="2.8" stroke-linecap="round"/><circle cx="7.8" cy="6.9" r="5" fill="url(#ggl)" stroke="#6a9fd4" stroke-width="1.7"/><rect x="2.2" y="14" width="8.6" height="2.6" fill="#e8584a" stroke="#b0523a" stroke-width="0.7"/></svg>
<div class="tb" style="left:442px;top:122px;width:20px;height:20px;border-width:2px 1px 1px 2px"></div>
<svg style="left:442.3px;top:122px" width="18" height="18" viewBox="0 0 18 18"><path d="M8.4 11.6L4 16" stroke="#8a8a8a" stroke-width="2.6" stroke-linecap="round"/><path d="M8.4 11.6L4 16" stroke="#f0f0f0" stroke-width="1.3" stroke-linecap="round"/><circle cx="12.4" cy="7.6" r="5.1" fill="#eef1ff" stroke="#3a4cdc" stroke-width="1.4"/><path d="M10.3 6.9V5.5H11.7M13.1 5.5H14.5V6.9M14.5 8.3V9.7H13.1M11.7 9.7H10.3V8.3" stroke="#1a2ab8" stroke-width="1.25" fill="none"/></svg>
<div style="left:467px;top:124px;width:1px;height:17px;background:#828282"></div><div style="left:468px;top:124px;width:1px;height:17px;background:#fff"></div>
<span class="t" style="left:470.5px;top:124.65px;font-size:12px;">Tool:</span>
<div class="tb" style="left:503px;width:18px;height:18px"></div>
<svg style="left:507px;top:124px" width="11" height="17" viewBox="0 0 11 17"><path d="M0.8 0.8V12.8L3.6 10.2L6 15.8L8.2 14.8L5.8 9.4H9.8Z" fill="#fff" stroke="#000" stroke-width="1.2" stroke-linejoin="round"/></svg>
<div class="tbs" style="left:523px;width:18px;height:18px"></div>
<svg style="left:524px;top:124px" width="16" height="16" viewBox="0 0 16 16"><ellipse cx="8" cy="14.6" rx="4.6" ry="1.2" fill="#b5b5b5"/><path d="M8 0.6L11 4H9.2V6.8H12V5L15.4 8L12 11V9.2H9.2V12H11L8 15.2L5 12H6.8V9.2H4V11L0.6 8L4 5V6.8H6.8V4H5Z" fill="#3f78c4" stroke="#2a5aa0" stroke-width="0.7"/></svg>
<div class="tb" style="left:543px;width:18px;height:18px"></div>
<svg style="left:544px;top:124px" width="17" height="17" viewBox="0 0 17 17"><defs><linearGradient id="gtri" x1="0" y1="0" x2="0" y2="1"><stop offset="0" stop-color="#fbe76a"/><stop offset="1" stop-color="#e8b41a"/></linearGradient></defs><path d="M15.6 0.8V15.6H0.8Z" fill="url(#gtri)" stroke="#000" stroke-width="1.3" stroke-linejoin="round"/><path d="M12 7.2V12.4H6.8Z" fill="#d9d9d9" stroke="#000" stroke-width="1"/></svg>
<div style="left:566px;top:124px;width:1px;height:17px;background:#828282"></div><div style="left:567px;top:124px;width:1px;height:17px;background:#fff"></div>
<span class="t" style="left:570px;top:124.65px;font-size:12px;">Draw:</span>
<div class="tbs" style="left:609px;width:18px;height:18px"></div>
<svg style="left:610px;top:124px" width="17" height="17" viewBox="0 0 17 17"><path d="M6.5 11V3" stroke="#0a0ae6" stroke-width="2"/><path d="M3.6 4.2L6.5 0.2L9.4 4.2Z" fill="#0a0ae6"/><path d="M6.5 10.6H13.5" stroke="#0aa820" stroke-width="2"/><path d="M12.6 7.6L17 10.6L12.6 13.6Z" fill="#0aa820"/><path d="M6.5 10.8L2.5 14.8" stroke="#e01010" stroke-width="1.4"/><path d="M1 16.4L1.6 12.8L4.6 15.8Z" fill="#f01010"/><circle cx="6.5" cy="10.8" r="1.2" fill="#111"/></svg>
<div class="tbs" style="left:629px;width:18px;height:18px"></div>
<svg style="left:630px;top:124px" width="16" height="16" viewBox="0 0 16 16"><path d="M2.1 0.3V16M6.2 0.3V16M10.5 0.3V16M14.5 0.3V16M0.3 1.8H16M0.3 5.9H16M0.3 10.1H16M0.3 14.1H16" stroke="#2a2a2a" stroke-width="1"/></svg>
<div class="tb" style="left:649.5px;width:18px;height:18px;background:#ececec"></div>
<svg style="left:650.5px;top:124px" width="16" height="16" viewBox="0 0 16 16"><rect x="2.8" y="3.8" width="11.6" height="8.6" fill="none" stroke="#3a3a90" stroke-width="1.4"/><rect x="2.2" y="3.2" width="11.6" height="8.6" fill="none" stroke="#e010f0" stroke-width="1.5"/></svg>
<div class="tb" style="left:669.5px;width:18px;height:18px;background:#d9d9d9"></div>
<svg style="left:670.5px;top:124px" width="16" height="16" viewBox="0 0 16 16"><path d="M1 1H5.8V9.8H14.8V14.6H1Z" fill="#e6e01e" stroke="#6e6c0a" stroke-width="1"/><path d="M3.6 2.8H5.8M3.6 4.6H5.8M3.6 6.4H5.8M3.6 8.2H5.8M7 12.4V14.6M8.8 12.4V14.6M10.6 12.4V14.6M12.4 12.4V14.6" stroke="#6e6c0a" stroke-width="0.8"/></svg>
<div class="tbs" style="left:689.5px;width:18px;height:18px"></div>
<svg style="left:690.5px;top:124px" width="16" height="16" viewBox="0 0 16 16"><rect x="5.4" y="0" width="5" height="15.4" fill="#4a4a4a"/><path d="M7.2 0V15.4" stroke="#a8a8a8" stroke-width="1.3"/><path d="M9.4 0V7" stroke="#2a2a2a" stroke-width="1.2"/><path d="M5.4 7L10.4 9.5M5.4 10L10.4 12.5M5.4 13L10.4 15.4" stroke="#111" stroke-width="1.1"/></svg>
<div class="tbs" style="left:709.5px;width:18px;height:18px"></div>
<svg style="left:710.5px;top:124px" width="16" height="16" viewBox="0 0 16 16"><circle cx="10.6" cy="2.4" r="1.9" fill="#000"/><path d="M9.6 4.8L7.4 9.4L10.4 11.6L9.4 15.6" stroke="#000" stroke-width="2" fill="none" stroke-linejoin="round"/><path d="M7.6 9.2L4.6 11.4L1.6 10.8" stroke="#000" stroke-width="1.9" fill="none"/><path d="M9.4 5.2L5.8 5.2L4.2 7.6" stroke="#000" stroke-width="1.6" fill="none"/><path d="M9.8 5.6L12 8L14.4 7.6" stroke="#000" stroke-width="1.6" fill="none"/></svg>
<div class="tb" style="left:729.5px;width:18px;height:18px;background:#d9d9d9"></div>
<svg style="left:730.5px;top:124px" width="16" height="16" viewBox="0 0 16 16"><rect x="2.8" y="3.8" width="11.6" height="8.6" fill="none" stroke="#3a4a80" stroke-width="1.3"/><rect x="2.2" y="3.2" width="11.6" height="8.6" fill="#dcdcdc" stroke="#f0a800" stroke-width="1.5"/></svg>
<div class="tb" style="left:749.5px;width:18px;height:18px;background:#d9d9d9"></div>
<svg style="left:750.5px;top:124px" width="16" height="16" viewBox="0 0 16 16"><path d="M1.5 4.5V14.5H15.5V4.5" fill="none" stroke="#222" stroke-width="1.1" stroke-dasharray="1 1"/><path d="M1.5 4.5H4L8 0.8L12 4.5H15.5" fill="none" stroke="#222" stroke-width="1.1" stroke-dasharray="1 1"/><path d="M4.5 7.5L8 4.2L11.5 7.5L8 11Z" fill="none" stroke="#222" stroke-width="1" stroke-dasharray="1 1"/></svg>
<div class="tb" style="left:769px;top:122px;width:20px;height:20px;border-width:2px 1px 1px 2px"></div>
<svg style="left:771px;top:124px" width="16" height="16" viewBox="0 0 16 16"><path d="M12.2 5.4A5.4 5.4 0 1 0 13.2 10.2" stroke="#a2a2a2" stroke-width="4" fill="none"/><path d="M8.6 6.8L15.6 7L15 0.4Z" fill="#a2a2a2"/><path d="M12.2 5.4A5.4 5.4 0 1 0 13.2 10.2" stroke="#e4e4e4" stroke-width="2.2" fill="none"/><path d="M10.4 6L14.8 6.2L14.4 2Z" fill="#e4e4e4"/></svg>
<div style="left:979px;top:123.6px;width:26.5px;height:17px;background:#fff;border:1px solid;border-color:#fff #b8b8b8 #b8b8b8 #fff"></div>
<span class="t" style="left:980px;top:126.05px;font-size:12px;">5</span>
<div class="raised" style="left:1008px;top:124px;width:14px;height:16px"></div>
<svg style="left:1010px;top:127px" width="10" height="10" viewBox="0 0 10 10"><path d="M0 0.5H10L5 9.5Z" fill="#000"/></svg>
<div style="left:343px;top:144px;width:667.4px;height:417.8px;background:#000"></div>
<div style="left:344.2px;top:145.2px;width:665.2px;height:415.5px;background:#fff;overflow:hidden">
<svg style="left:0;top:0" width="665.2" height="415.5" viewBox="344.2 145.2 665.2 415.5">
<path d="M344.2 225.5H1009.4000000000001 M344.2 268.5H1009.4000000000001 M344.2 311.5H1009.4000000000001 M344.2 354.5H1009.4000000000001 M344.2 397.5H1009.4000000000001 M344.2 440.5H1009.4000000000001 M344.2 483.5H1009.4000000000001 M358.5 225V483.9 M401.5 225V483.9 M444.5 225V483.9 M487.5 225V483.9 M531.5 225V483.9 M574.5 225V483.9 M617.5 225V483.9 M660.5 225V483.9 M703.5 225V483.9 M746.5 225V483.9 M789.5 225V483.9 M832.5 225V483.9 M876.5 225V483.9 M919.5 225V483.9 M962.5 225V483.9 M1005.5 225V483.9" stroke="#7c7c7c" stroke-width="1" stroke-dasharray="1 3" fill="none" shape-rendering="crispEdges"/>
<path d="M505.25 275.10 L494.00 276.35 L469.00 279.85 L444.00 283.85 L414.00 289.85 L394.00 296.10 L381.50 301.10 L369.00 307.35 L362.00 311.30 L358.60 315.60 L358.60 392.90 L362.00 397.20 L369.00 401.15 L381.50 407.40 L394.00 412.40 L414.00 418.65 L444.00 424.65 L469.00 428.65 L494.00 432.15 L505.25 433.40 M525.75 273.10 L543.00 271.40 L574.00 270.60 L675.00 270.60 L680.60 271.30 L680.60 296.80 L707.40 296.80 L707.40 272.80 L747.50 275.60 L790.00 279.90 L833.00 283.90 L846.00 285.60 L893.00 291.90 L898.00 292.60 M525.75 436.10 L543.00 437.80 L574.00 438.60 L675.00 438.60 L680.60 437.90 L680.60 412.40 L707.40 412.40 L707.40 436.40 L747.50 433.60 L790.00 429.30 L833.00 425.30 L846.00 423.60 L893.00 417.30 L895.50 415.80 M916.75 295.60 L963.00 303.85 L1009.50 313.70 M915.50 412.50 L963.00 404.40 L1009.50 394.60" stroke="#c6c6c6" stroke-width="1.2" fill="none"/>
<rect x="471.4" y="333.1" width="87.2" height="43.2" rx="21.6" fill="none" stroke="#c6c6c6" stroke-width="1.2"/>
<rect x="777.9" y="333.1" width="87.2" height="43.2" rx="21.6" fill="none" stroke="#c6c6c6" stroke-width="1.2"/>
<path d="M505.25 273.00 L494.00 274.25 L469.00 277.75 L444.00 281.75 L414.00 287.75 L394.00 294.00 L381.50 299.00 L369.00 305.25 L362.00 309.20 L356.50 313.50 L356.50 395.00 L362.00 399.30 L369.00 403.25 L381.50 409.50 L394.00 414.50 L414.00 420.75 L444.00 426.75 L469.00 430.75 L494.00 434.25 L505.25 435.50 M525.75 271.00 L534.00 269.90 L543.00 269.30 L574.00 268.50 L627.00 268.30 L629.00 267.50 L632.00 267.50 L634.00 268.30 L675.00 268.50 L682.50 269.50 L682.50 294.75 L705.50 294.75 L705.50 271.50 L708.75 270.50 L747.50 273.50 L790.00 277.75 L833.00 281.75 L846.00 283.50 L893.00 289.75 L898.00 290.50 M525.75 438.20 L534.00 439.30 L543.00 439.90 L574.00 440.70 L627.00 440.90 L629.00 441.70 L632.00 441.70 L634.00 440.90 L675.00 440.70 L682.50 439.70 L682.50 414.45 L705.50 414.45 L705.50 437.70 L708.75 438.70 L747.50 435.70 L790.00 431.45 L833.00 427.45 L846.00 425.70 L893.00 419.45 L895.50 417.80 M916.75 293.50 L963.00 301.75 L1009.50 311.60 M915.50 414.60 L963.00 406.50 L1009.50 396.70" stroke="#000" stroke-width="1.2" fill="none" stroke-linejoin="round"/>
<rect x="473.5" y="335.2" width="83.0" height="39" rx="19.5" fill="none" stroke="#000" stroke-width="1.2"/>
<rect x="780" y="335.2" width="83" height="39" rx="19.5" fill="none" stroke="#000" stroke-width="1.2"/>
<path d="M505.25 273.00 L493.00 335.50 M525.75 271.00 L493.00 335.50 M493.00 335.50 L525.75 437.50 M359.00 354.50 L503.00 434.80 M898.00 290.50 L916.75 293.50 M800.50 335.50 L894.50 416.50 M800.50 335.50 L916.00 413.80" stroke="#000" stroke-width="1.1" stroke-dasharray="4 4" fill="none"/>
<path d="M359 354.5H394" stroke="#e00000" stroke-width="1.1" stroke-dasharray="4 2" fill="none"/>
<path d="M401.5 354.5L392.5 351 L394.5 354.5 L392.5 358Z" fill="#e00000"/>
<path d="M355.8 320.5 L357.3 313.2 L359 317.5 L360.8 320.5" stroke="#0a8a0a" stroke-width="1.3" fill="none"/>
</svg>
</div>
<div style="left:1010px;top:144px;width:13px;height:418px;background:#b3b3b3;border:1px solid;border-color:#828282 #fff #fff #828282"></div>
<svg style="left:1011px;top:145px" width="11" height="11" viewBox="0 0 11 11"><path d="M5.5 0 L11 10.5 L0 10.5Z" fill="#d9d9d9"/><path d="M5.5 0 L0.5 10.5" stroke="#fff" stroke-width="1" fill="none"/><path d="M5.5 0 L10.5 10.5 L0 10.5" stroke="#828282" stroke-width="1" fill="none"/></svg>
<svg style="left:1011px;top:550px" width="11" height="11" viewBox="0 0 11 11"><path d="M0 0.5 L11 0.5 L5.5 11Z" fill="#d9d9d9"/><path d="M11 0.5 L0 0.5 L5.5 11" stroke="#fff" stroke-width="1" fill="none"/><path d="M5.5 11 L10.5 0.5" stroke="#828282" stroke-width="1" fill="none"/></svg>
<div class="raised" style="left:1011px;top:324px;width:11px;height:115px"></div>
<div style="left:343px;top:562.7px;width:667px;height:12px;background:#b3b3b3;border:1px solid;border-color:#828282 #fff #fff #828282"></div>
<svg style="left:344px;top:563.7px" width="11" height="10" viewBox="0 0 11 10"><path d="M0 5.0 L10.5 0 L10.5 10Z" fill="#d9d9d9"/><path d="M0 5.0 L10.5 0.5" stroke="#fff" fill="none"/><path d="M0 5.0 L10.5 9.5 L10.5 0" stroke="#828282" fill="none"/></svg>
<svg style="left:998px;top:563.7px" width="11" height="10" viewBox="0 0 11 10"><path d="M0.5 0 L11 5.0 L0.5 10Z" fill="#d9d9d9"/><path d="M0.5 10 L0.5 0 L11 5.0" stroke="#fff" fill="none"/><path d="M11 5.0 L0.5 9.5" stroke="#828282" fill="none"/></svg>
<div class="raised" style="left:577px;top:563.7px;width:173px;height:10px"></div>
</div>
</body>
</html>
